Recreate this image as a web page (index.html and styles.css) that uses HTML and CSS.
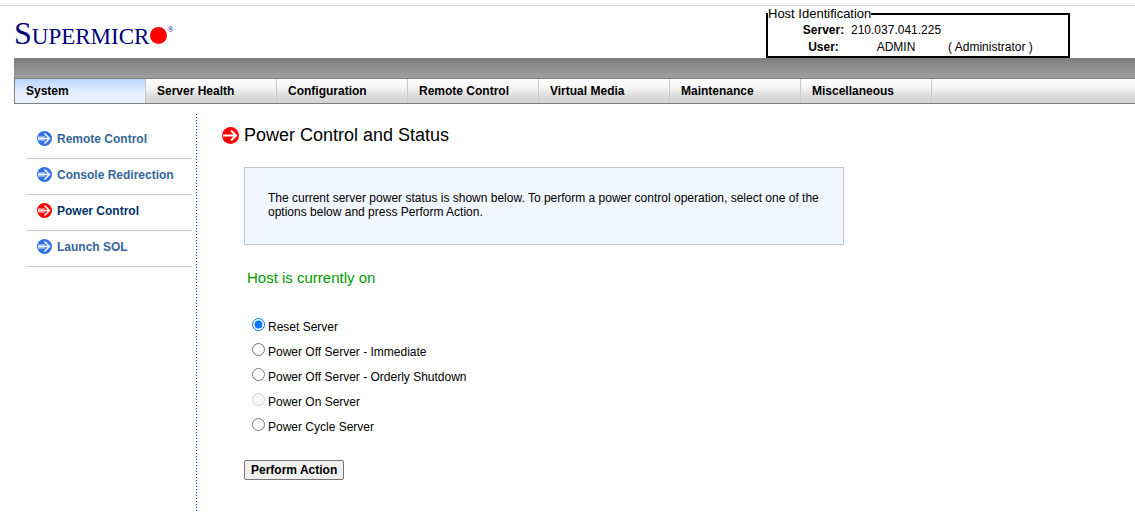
FILE: index.html
```html
<!DOCTYPE html>
<html lang="en">
<head>
<meta charset="utf-8">
<title>Power Control and Status</title>
<link rel="stylesheet" href="styles.css">
</head>
<body>
<svg class="sprite" aria-hidden="true">
  <symbol id="arrow" viewBox="0 0 17 17">
    <circle cx="8.5" cy="8.5" r="8.5" fill="currentColor"/>
    <path d="M1 8.5H14M9 3.5L14 8.5L9 13.5" fill="none" stroke="#fff" stroke-width="2"/>
  </symbol>
  <symbol id="arrow-small" viewBox="0 0 15 15">
    <circle cx="7.5" cy="7.5" r="7.5" fill="currentColor"/>
    <path d="M1 5H8V10H1z" fill="#fff" fill-opacity=".45"/>
    <path d="M1 7.5H12M7.5 2.5L12.5 7.5L7.5 12.5" fill="none" stroke="#fff" stroke-width="1.5"/>
  </symbol>
</svg>
<header class="header">
  <div class="logo"><span class="logo-initial">S</span><span>UPERMICR</span><svg class="logo-dot" viewBox="0 0 16 16" aria-hidden="true"><circle cx="8" cy="8" r="8" fill="#f00"/></svg><span class="logo-mark">®</span></div>
  <fieldset class="host">
    <legend>Host Identification</legend>
    <table class="host-table">
      <tr><th scope="row">Server:</th><td>210.037.041.225</td><td></td></tr>
      <tr><th scope="row">User:</th><td>ADMIN</td><td class="role">( Administrator )</td></tr>
    </table>
  </fieldset>
</header>
<div class="band"></div>
<nav class="menu">
  <a class="menu-item active" href="#">System</a>
  <a class="menu-item" href="#">Server Health</a>
  <a class="menu-item" href="#">Configuration</a>
  <a class="menu-item" href="#">Remote Control</a>
  <a class="menu-item" href="#">Virtual Media</a>
  <a class="menu-item" href="#">Maintenance</a>
  <a class="menu-item" href="#">Miscellaneous</a>
</nav>
<div class="page">
  <aside class="sidebar">
    <a class="side-item" href="#"><svg class="side-icon"><use href="#arrow-small"/></svg>Remote Control</a>
    <a class="side-item" href="#"><svg class="side-icon"><use href="#arrow-small"/></svg>Console Redirection</a>
    <a class="side-item current" href="#"><svg class="side-icon"><use href="#arrow-small"/></svg>Power Control</a>
    <a class="side-item" href="#"><svg class="side-icon"><use href="#arrow-small"/></svg>Launch SOL</a>
  </aside>
  <main class="content">
    <h1 class="title"><svg class="title-icon"><use href="#arrow"/></svg>Power Control and Status</h1>
    <form class="form">
      <p class="info">The current server power status is shown below. To perform a power control operation, select one of the options below and press Perform Action.</p>
      <p class="status">Host is currently on</p>
      <div class="options">
        <label class="option"><input type="radio" name="action" checked><span>Reset Server</span></label>
        <label class="option"><input type="radio" name="action"><span>Power Off Server - Immediate</span></label>
        <label class="option"><input type="radio" name="action"><span>Power Off Server - Orderly Shutdown</span></label>
        <label class="option"><input type="radio" name="action" disabled><span>Power On Server</span></label>
        <label class="option"><input type="radio" name="action"><span>Power Cycle Server</span></label>
      </div>
      <button class="submit" type="button">Perform Action</button>
    </form>
  </main>
</div>
</body>
</html>
```
FILE: styles.css
```css
* { box-sizing: border-box; }
body {
  margin: 0;
  padding-top: 5px;
  min-height: 100vh;
  display: flex;
  flex-direction: column;
  background: #fff;
  color: #000;
  font: 12px/14px "Liberation Sans", Arial, sans-serif;
}
a { text-decoration: none; }
.sprite { position: absolute; width: 0; height: 0; }

.header {
  display: flex;
  justify-content: space-between;
  align-items: flex-start;
  border-top: 1px solid #dadada;
  padding: 0 65px 0 14px;
}
.logo {
  display: flex;
  align-items: baseline;
  padding-top: 11px;
  color: #000078;
  font: 23px/32px "Liberation Serif", "Times New Roman", serif;
}
.logo-initial { font-size: 32px; }
.logo-dot { width: 17px; height: 17px; margin-left: 1px; }
.logo-mark { align-self: flex-start; font-size: 8px; line-height: 26px; }

.host {
  width: 304px;
  margin: 0;
  padding: 1px 0 0;
  border: 2px solid #000;
}
.host legend { padding: 0; font-size: 13px; line-height: 15px; }
.host-table { margin-left: 28px; border-collapse: collapse; line-height: 17px; }
.host-table th, .host-table td { padding: 0; text-align: center; }
.host-table th { width: 55px; }
.host-table td { width: 90px; white-space: nowrap; }
.host-table .role { padding-left: 7px; }

.band {
  height: 20px;
  margin-left: 14px;
  background: linear-gradient(#7e7e7e, #a0a0a0);
}
.menu {
  display: flex;
  margin-left: 14px;
  border: 1px solid #808080;
  border-right: 0;
  background: linear-gradient(#fff, #f4f4f4 9px, #d8d8d8 18px, #d4d4d4);
}
.menu-item {
  width: 131px;
  padding: 0 11px;
  border-right: 1px solid #c8c8c8;
  color: #000;
  font-weight: bold;
  line-height: 24px;
}
.menu-item.active { background: linear-gradient(#b8d6ff, #e6f0ff 14px); }

.page { display: flex; flex: 1; padding-top: 10px; }
.sidebar {
  width: 197px;
  padding: 9px 5px 0 27px;
  background: repeating-linear-gradient(#0033ff 0 1px, transparent 1px 3px) right / 1px 100% no-repeat;
}
.side-item {
  display: flex;
  align-items: center;
  gap: 5px;
  height: 36px;
  padding: 0 0 4px 10px;
  border-bottom: 1px solid #c8c8c8;
  color: #336699;
  font-weight: bold;
}
.side-icon { width: 15px; height: 15px; color: #3070e8; }
.side-item.current { color: #003366; }
.current .side-icon { color: #f00; }

.content { flex: 1; padding: 10px 20px 20px 25px; }
.title {
  display: flex;
  align-items: center;
  gap: 5px;
  margin: 0;
  font-size: 18px;
  font-weight: normal;
  line-height: 22px;
}
.title-icon { width: 17px; height: 17px; color: #f00; }
.form { padding-left: 22px; }
.info {
  max-width: 600px;
  margin: 21px 0 0;
  padding: 23px 20px 25px 23px;
  border: 1px solid #c8c8c8;
  background: #f1f6ff;
}
.status { margin: 24px 0 0 3px; color: #090; font-size: 15px; line-height: 18px; }
.options { margin: 28px 0 0 8px; }
.option { display: flex; gap: 3px; height: 25px; }
.option input { width: 13px; height: 13px; margin: 3px 0 0; }
.option span { line-height: 24px; }
.submit {
  margin-top: 20px;
  height: 20px;
  padding: 0 6px;
  border: 1px solid #767676;
  border-radius: 2px;
  background: #efefef;
  color: #000;
  font: bold 12px/18px "Liberation Sans", Arial, sans-serif;
}
```
